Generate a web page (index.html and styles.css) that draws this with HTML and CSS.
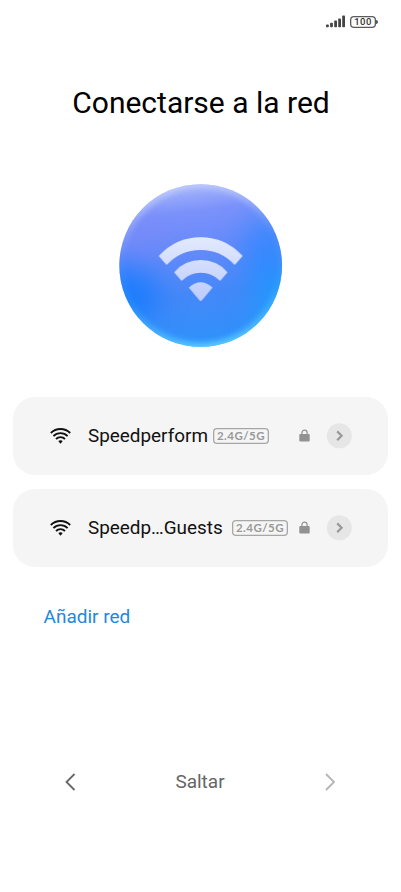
FILE: index.html
```html
<!DOCTYPE html>
<html lang="es">
<head>
<meta charset="utf-8">
<title>Conectarse a la red</title>
<link rel="stylesheet" href="styles.css">
</head>
<body>
<svg class="defs" width="0" height="0" aria-hidden="true">
  <symbol id="wifi" viewBox="0 0 21 16">
    <g fill="none" stroke="currentColor" stroke-width="1.800">
      <path d="M.8 5A13.800 13.800 0 0 1 20.200 5"/>
      <path d="M3.400 8.100A10 10 0 0 1 17.600 8.100"/>
      <path d="M6 11A6.300 6.300 0 0 1 15 11"/>
    </g>
    <path fill="currentColor" d="M8.300 13Q10.500 11.300 12.700 13L11 15.200Q10.500 15.700 10 15.200Z"/>
  </symbol>
  <symbol id="lock" viewBox="0 0 11 13">
    <path d="M2.900 6V3.700a2.600 2.600 0 0 1 5.200 0V6" fill="none" stroke="#929292" stroke-width="1.200"/>
    <rect x=".3" y="4.900" width="10.400" height="7.600" rx="1" fill="#929292"/>
  </symbol>
  <symbol id="go" viewBox="0 0 26 26">
    <circle cx="13.300" cy="12.800" r="12.500" fill="#e6e6e6"/>
    <path d="M11.200 8.400L15.600 12.800L11.200 17.200" fill="none" stroke="#999" stroke-width="2.200"/>
  </symbol>
</svg>
<header class="status">
  <svg class="signal" width="20" height="13" viewBox="0 0 20 13" fill="#444">
    <rect x="0" y="9.500" width="2.800" height="2.700" rx=".8"/>
    <rect x="4.100" y="7.800" width="2.800" height="4.400" rx=".8"/>
    <rect x="8.200" y="5.600" width="2.800" height="6.600" rx=".8"/>
    <rect x="12.200" y="3.400" width="2.800" height="8.800" rx=".8"/>
    <rect x="16.200" y=".4" width="2.800" height="11.800" rx=".8"/>
  </svg>
  <span class="battery">100</span>
</header>
<main>
  <h1>Conectarse a la red</h1>
  <svg class="hero" width="182" height="182" viewBox="0 0 546 546">
    <defs>
      <linearGradient id="base" x1=".42" y1="0" x2=".55" y2="1">
        <stop offset=".05" stop-color="#a8b7fa"/>
        <stop offset=".2" stop-color="#7b92fb"/>
        <stop offset=".4" stop-color="#668afa"/>
        <stop offset=".65" stop-color="#4588f8"/>
        <stop offset=".95" stop-color="#2c92fc"/>
      </linearGradient>
      <linearGradient id="glyph" gradientUnits="userSpaceOnUse" x1="0" y1="185" x2="0" y2="378">
        <stop offset="0" stop-color="#e3eafe"/>
        <stop offset="1" stop-color="#bccbfc"/>
      </linearGradient>
      <filter id="soft" filterUnits="userSpaceOnUse" x="-150" y="-150" width="846" height="846" color-interpolation-filters="sRGB"><feGaussianBlur stdDeviation="42"/></filter>
      <filter id="edge" filterUnits="userSpaceOnUse" x="-50" y="-50" width="646" height="646" color-interpolation-filters="sRGB"><feGaussianBlur stdDeviation="10"/></filter>
      <linearGradient id="rim" x1=".45" y1="0" x2=".6" y2="1">
        <stop offset="0" stop-color="#c6d0fc" stop-opacity=".9"/>
        <stop offset=".16" stop-color="#b4c4fc" stop-opacity=".6"/>
        <stop offset=".38" stop-color="#7fa6fc" stop-opacity=".1"/>
        <stop offset=".65" stop-color="#38b8ff" stop-opacity=".25"/>
        <stop offset="1" stop-color="#60d4ff"/>
      </linearGradient>
      <clipPath id="disc"><circle cx="272" cy="271.500" r="244"/></clipPath>
    </defs>
    <g clip-path="url(#disc)">
      <rect width="546" height="546" fill="url(#base)"/>
      <g filter="url(#soft)">
        <ellipse cx="85" cy="170" rx="85" ry="65" fill="#7a84f5" opacity=".4"/>
        <ellipse cx="40" cy="360" rx="110" ry="90" fill="#0c78ff" opacity=".7"/>
        <ellipse cx="475" cy="240" rx="80" ry="120" fill="#2a88ff" opacity=".7"/>
        <ellipse cx="500" cy="375" rx="70" ry="100" fill="#18a0ff" opacity=".6"/>
      </g>
      <circle cx="272" cy="271.500" r="246" fill="none" stroke="url(#rim)" stroke-width="26" filter="url(#edge)"/>
    </g>
    <g fill="url(#glyph)" stroke="url(#glyph)" stroke-width="4" stroke-linejoin="round">
      <path d="M149 243A166 166 0 0 1 395 243L374 267A140 140 0 0 0 170 267Z"/>
      <path d="M195 292A104 104 0 0 1 350 292L330 315A81 81 0 0 0 215 315Z"/>
      <path d="M239 338Q272 310 305 338L275 374Q272 378 269 374Z"/>
    </g>
  </svg>
  <ul class="networks">
    <li>
      <svg class="wifi"><use href="#wifi"/></svg>
      <span class="name first">Speedperform</span>
      <span class="band">2.4G/5G</span>
      <svg class="lock"><use href="#lock"/></svg>
      <svg class="go"><use href="#go"/></svg>
    </li>
    <li>
      <svg class="wifi"><use href="#wifi"/></svg>
      <span class="name second">Speedp…Guests</span>
      <span class="band">2.4G/5G</span>
      <svg class="lock"><use href="#lock"/></svg>
      <svg class="go"><use href="#go"/></svg>
    </li>
  </ul>
  <a class="add">Añadir red</a>
</main>
<footer>
  <svg width="12" height="20" viewBox="0 0 12 20"><path d="M10.500 2L2.500 10L10.500 18" stroke="#666"/></svg>
  <span>Saltar</span>
  <svg width="12" height="20" viewBox="0 0 12 20"><path d="M2 2L10 10L2 18" stroke="#b4b4b4"/></svg>
</footer>
</body>
</html>
```
FILE: styles.css
```css
* { box-sizing: border-box; }
body {
  margin: 0;
  height: 892px;
  background: #fff;
  color: #111;
  font-family: Roboto, "Liberation Sans", sans-serif;
  display: flex;
  flex-direction: column;
  overflow: hidden;
}
.defs { position: absolute; }
svg { display: block; flex: none; }
.status {
  height: 43px;
  padding: 0 25px 0 0;
  display: flex;
  align-items: center;
  justify-content: flex-end;
  gap: 4px;
}
.battery {
  position: relative;
  width: 26px;
  height: 12px;
  border-radius: 4px;
  box-shadow: inset 0 0 0 1.300px #5a5a5a;
  color: #333;
  font-size: 9.500px;
  font-weight: 500;
  line-height: 12px;
  letter-spacing: .4px;
  text-align: center;
}
.battery::after {
  content: "";
  position: absolute;
  right: -2px;
  top: 4px;
  width: 2px;
  height: 4px;
  border-radius: 0 2px 2px 0;
  background: #555;
}
main { display: flex; flex-direction: column; }
h1 {
  margin: 40px 0 0;
  padding-left: 1px;
  height: 40px;
  font-size: 30px;
  line-height: 40px;
  font-weight: 400;
  text-align: center;
  color: #000;
}
.hero { margin: 52px 0 0 110px; }
.networks {
  list-style: none;
  margin: 39.600px 13.400px 0 13.200px;
  padding: 0;
  display: grid;
  gap: 14px;
}
.networks li {
  height: 78px;
  padding: 0 35.600px 0 36.800px;
  border-radius: 22px;
  background: #f5f5f5;
  display: flex;
  align-items: center;
}
.wifi { width: 21px; height: 16px; }
.name { margin-left: 17px; padding-top: 1px; font-size: 18.900px; line-height: 24px; white-space: nowrap; }
.first { width: 121px; }
.second { width: 140px; }
.band {
  margin-left: 4px;
  width: 56px;
  height: 16px;
  border-radius: 4px;
  box-shadow: inset 0 0 0 1.300px #a6a6a6;
  color: #999;
  font-family: Lato, sans-serif;
  font-size: 11.500px;
  font-weight: 700;
  line-height: 16px;
  letter-spacing: .45px;
  text-align: center;
}
.lock { width: 11px; height: 13px; margin-left: auto; }
.go { width: 26px; height: 26px; margin-left: 16px; }
.add {
  margin: 37.400px 0 0 43.500px;
  font-size: 19px;
  line-height: 26px;
  color: #2587dc;
}
footer {
  margin: 140px 65px 0 64px;
  height: 24px;
  display: flex;
  align-items: center;
  justify-content: space-between;
  font-size: 19px;
  color: #666;
}
footer path { fill: none; stroke-width: 1.800; }
```
